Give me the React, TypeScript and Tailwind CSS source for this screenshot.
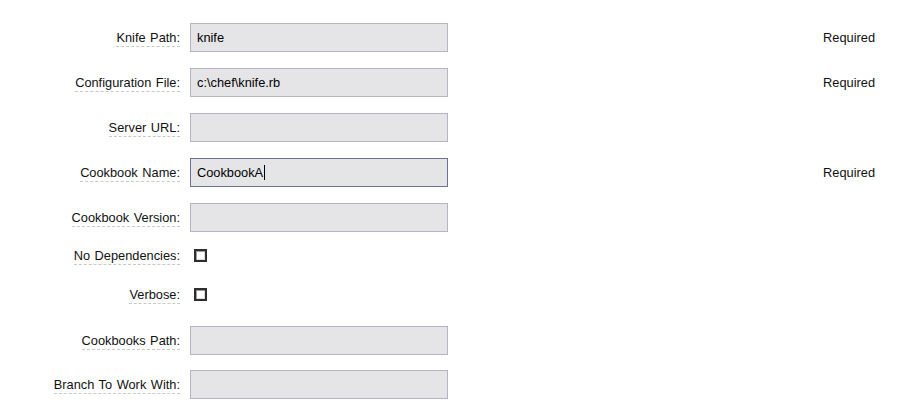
import React from 'react';

type Field = {
  label: string;
  kind: 'text' | 'check';
  value?: string;
  required?: boolean;
  focused?: boolean;
  rowClass: string;
};

const fields: Field[] = [
  { label: 'Knife Path:', kind: 'text', value: 'knife', required: true, rowClass: 'h-[45px]' },
  { label: 'Configuration File:', kind: 'text', value: 'c:\\chef\\knife.rb', required: true, rowClass: 'h-[45px]' },
  { label: 'Server URL:', kind: 'text', value: '', rowClass: 'h-[45px]' },
  { label: 'Cookbook Name:', kind: 'text', value: 'CookbookA', required: true, focused: true, rowClass: 'h-[45px]' },
  { label: 'Cookbook Version:', kind: 'text', value: '', rowClass: 'h-[45px]' },
  { label: 'No Dependencies:', kind: 'check', rowClass: 'h-[30px]' },
  { label: 'Verbose:', kind: 'check', rowClass: 'h-[48px]' },
  { label: 'Cookbooks Path:', kind: 'text', value: '', rowClass: 'h-[44px]' },
  { label: 'Branch To Work With:', kind: 'text', value: '', rowClass: 'h-[45px]' },
];

const TextBox: React.FC<{ value: string; focused?: boolean }> = ({ value, focused }) => (
  <div
    className={`w-[258px] h-[29px] bg-[#e5e5e8] border flex items-center px-[6px] text-black ${
      focused ? 'border-[#6c7291]' : 'border-[#b4b4c5]'
    }`}
  >
    <span className="whitespace-pre">{value}</span>
    {focused && <span className="inline-block w-px h-[15px] bg-black ml-px" />}
  </div>
);

const CheckBox: React.FC = () => (
  <div className="ml-[4px] w-[13px] h-[13px] border-2 border-[#2e2e2e] bg-white shadow-[inset_1px_1px_0_#9a9a9a,inset_-1px_-1px_0_#dcdcdc]" />
);

export default function App() {
  return (
    <div
      className="w-[910px] h-[413px] bg-white pt-[15px] pr-[35px] text-[12.8px] text-[#111] overflow-hidden"
      style={{ fontFamily: '"Liberation Sans", Arial, sans-serif' }}
    >
      {fields.map((f) => (
        <div key={f.label} className={`flex items-center ${f.rowClass}`}>
          <div className="w-[180px] flex justify-end pt-[2px]">
            <span className="leading-[15px] pb-[1px] border-b border-dashed border-[#c9c9c9] [word-spacing:1px]">
              {f.label}
            </span>
          </div>
          <div className="ml-[10px]">
            {f.kind === 'text' ? <TextBox value={f.value ?? ''} focused={f.focused} /> : <CheckBox />}
          </div>
          <div className="flex-1 text-right">{f.required ? 'Required' : ''}</div>
        </div>
      ))}
    </div>
  );
}
